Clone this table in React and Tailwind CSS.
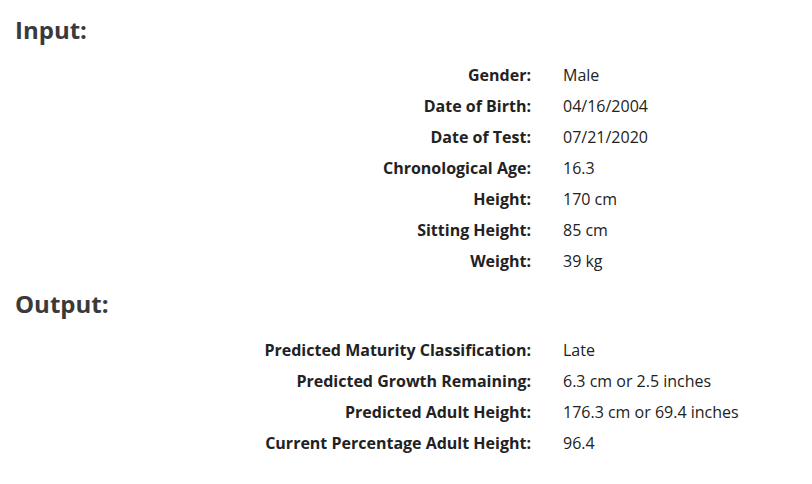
export default function App() {
  const input = [
    ["Gender:", "Male"],
    ["Date of Birth:", "04/16/2004"],
    ["Date of Test:", "07/21/2020"],
    ["Chronological Age:", "16.3"],
    ["Height:", "170 cm"],
    ["Sitting Height:", "85 cm"],
    ["Weight:", "39 kg"],
  ];
  const output = [
    ["Predicted Maturity Classification:", "Late"],
    ["Predicted Growth Remaining:", "6.3 cm or 2.5 inches"],
    ["Predicted Adult Height:", "176.3 cm or 69.4 inches"],
    ["Current Percentage Adult Height:", "96.4"],
  ];
  const Rows = ({ rows }) => (
    <div className="flex flex-col">
      {rows.map(([k, v]) => (
        <div key={k} className="flex h-[31px] items-center">
          <div className="w-[516px] text-right font-bold text-[#222]">{k}</div>
          <div className="pl-[32px] text-[#222]">{v}</div>
        </div>
      ))}
    </div>
  );
  return (
    <div
      className="min-h-[484px] w-[812px] bg-white px-[15px] text-[16px]"
      style={{ fontFamily: '"Open Sans", sans-serif' }}
    >
      <h2 className="pt-[15px] text-[24px] font-bold leading-[30px] text-[#3a3a3a]">Input:</h2>
      <div className="mt-[14px]">
        <Rows rows={input} />
      </div>
      <h2 className="mt-[13px] text-[24px] font-bold leading-[30px] text-[#3a3a3a]">Output:</h2>
      <div className="mt-[15px]">
        <Rows rows={output} />
      </div>
    </div>
  );
}
